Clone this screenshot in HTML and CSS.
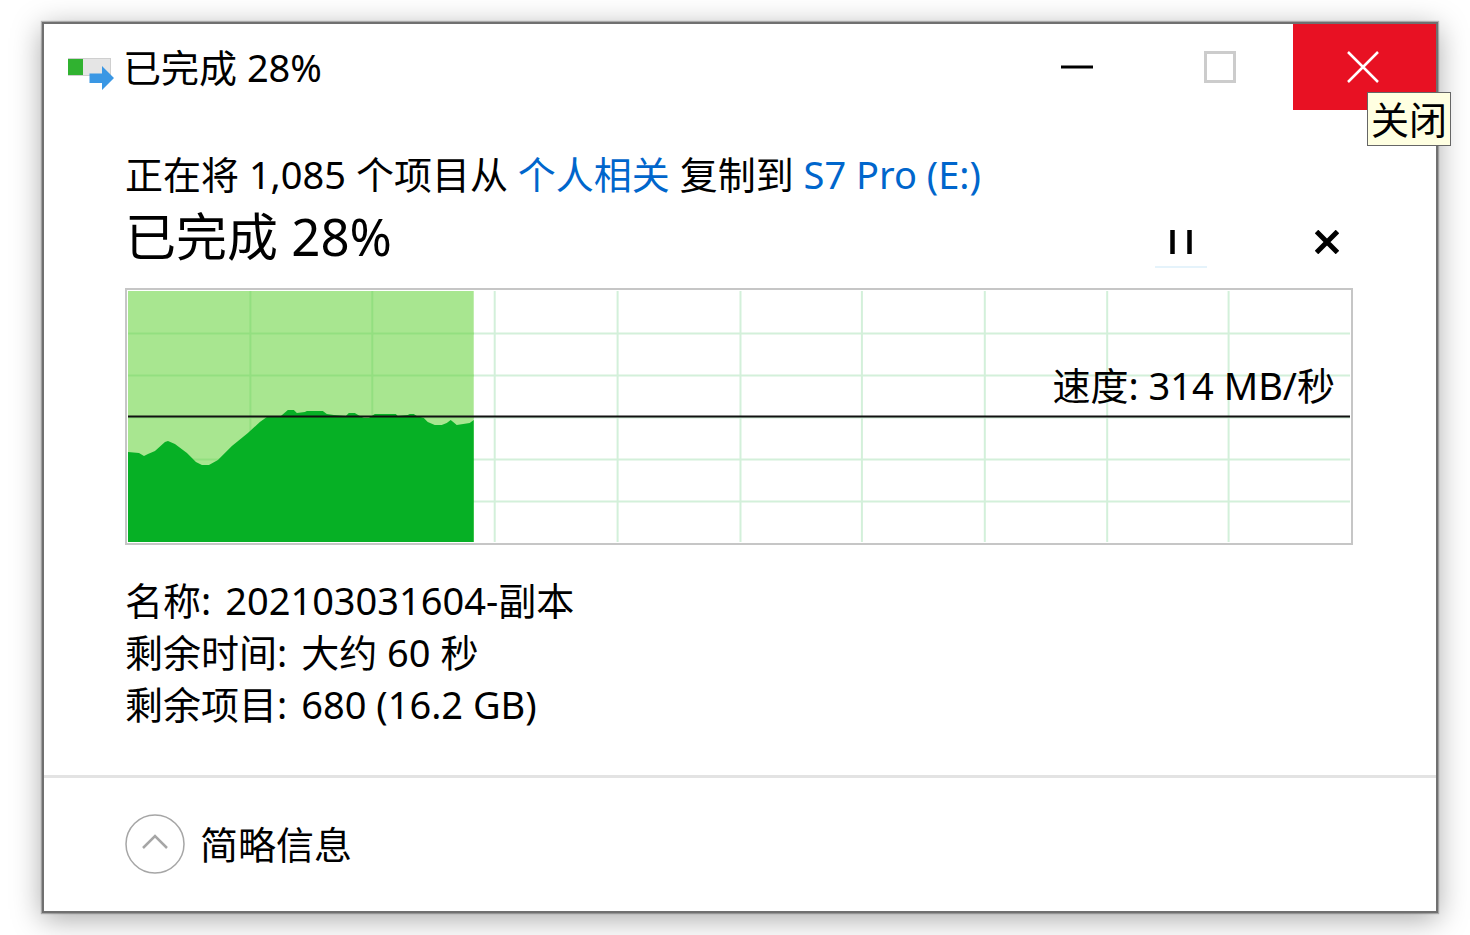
FILE: index.html
```
<!DOCTYPE html>
<html lang="zh-CN">
<head>
  <meta charset="UTF-8">
  <meta name="viewport" content="width=device-width, initial-scale=1.0">
  <title>已完成 28%</title>
  <link rel="stylesheet" href="styles.css">
</head>
<body>
  <div class="window">
    <header class="titlebar">
      <svg class="app-icon" width="48" height="36" viewBox="0 0 48 36" aria-hidden="true">
        <rect x="1.5" y="2.5" width="42" height="17" fill="#e5e5e5" stroke="#cfcfcf"/>
        <rect x="1" y="3" width="15" height="16" fill="#30b230"/>
        <path d="M22.5 17.5H35V10L47 22L35 34V27H22.5Z" fill="#3a97e4"/>
      </svg>
      <h1 class="title">已完成 28%</h1>
      <div class="window-controls">
        <button type="button" class="control" aria-label="最小化">
          <svg width="32" height="32" viewBox="0 0 32 32"><path d="M0 16H32" stroke="#000" stroke-width="3"/></svg>
        </button>
        <button type="button" class="control" aria-label="最大化" disabled>
          <svg width="32" height="32" viewBox="0 0 32 32"><rect x="1.5" y="1.5" width="29" height="29" fill="none" stroke="#ccc" stroke-width="3"/></svg>
        </button>
        <button type="button" class="control close" aria-describedby="closeTip" aria-label="关闭">
          <svg width="32" height="32" viewBox="0 0 32 32"><path d="M1 1L31 31M31 1L1 31" stroke="#fff" stroke-width="2.5"/></svg>
        </button>
        <span class="tooltip" id="closeTip" role="tooltip">关闭</span>
      </div>
    </header>

    <main>
      <p class="status">正在将 1,085 个项目从 <a href="#source">个人相关</a> 复制到 <a href="#target">S7 Pro (E:)</a></p>

      <div class="progress-row">
        <h2>已完成 28%</h2>
        <div class="actions">
          <button type="button" class="action pause" aria-label="暂停">
            <svg width="24" height="24" viewBox="0 0 24 24"><path d="M3.5 0V24M20.5 0V24" stroke="#000" stroke-width="4.5"/></svg>
          </button>
          <button type="button" class="action" aria-label="取消">
            <svg width="24" height="24" viewBox="0 0 24 24"><path d="M1.5 1.5L22.5 22.5M22.5 1.5L1.5 22.5" stroke="#000" stroke-width="5"/></svg>
          </button>
        </div>
      </div>

      <!-- Transfer speed chart -->
      <div class="chart">
        <svg viewBox="0 0 1223 251" preserveAspectRatio="none" aria-hidden="true">
          <path class="grid" d="M122.5 0V251M244.5 0V251M367 0V251M490 0V251M613 0V251M734.5 0V251M857.5 0V251M980 0V251M1101.5 0V251M0 42.5H1223M0 84.5H1223M0 126.5H1223M0 168.5H1223M0 210.5H1223"/>
          <rect class="done" width="346" height="251"/>
          <path class="done-grid" d="M122.5 0V251M244.5 0V251M0 42.5H346M0 84.5H346M0 126.5H346M0 168.5H346M0 210.5H346"/>
          <path class="speed" d="M0 161L11 162L16 165L20 163L27 160L37 151L40 150L47 153L59 162L68 171L74 174L81 174L90 169L104 155L120 142L132 131L139 126L153 125L160 119L166 119L169 122L177 121L179 120L195 120L199 123L206 124L218 125L221 122L227 122L232 125L236 127L241 127L247 123L268 123L270 125L280 124L282 123L286 123L289 125L296 127L300 131L307 134L314 134L319 132L323 129L329 134L342 132L346 129V251H0Z"/>
          <path class="average" d="M0 125.5H1223"/>
        </svg>
        <span class="speed-label">速度: 314 MB/秒</span>
      </div>

      <dl class="details">
        <div><dt>名称:</dt><dd>202103031604-副本</dd></div>
        <div><dt>剩余时间:</dt><dd>大约 60 秒</dd></div>
        <div><dt>剩余项目:</dt><dd>680 (16.2 GB)</dd></div>
      </dl>
    </main>

    <footer>
      <button type="button" class="toggle">
        <svg width="60" height="60" viewBox="0 0 60 60" fill="none" aria-hidden="true">
          <circle cx="30" cy="30" r="29" stroke="#a6a6a6" stroke-width="1.5"/>
          <path d="M18 34L30 22L42 34" stroke="#a6a6a6" stroke-width="2.5"/>
        </svg>
        简略信息
      </button>
    </footer>
  </div>
</body>
</html>
```
FILE: styles.css
```
* {
  box-sizing: border-box;
}

body {
  margin: 0;
  padding: 22px 32px 22px 42px;
  min-height: 100vh;
  display: flex;
  background: #fff;
  color: #000;
  font-family: "Noto Sans", "Noto Sans CJK SC", sans-serif;
  font-size: 38px;
  line-height: 52px;
}

h1, h2, p, dl, dd {
  margin: 0;
  font-weight: normal;
}

button {
  padding: 0;
  border: none;
  background: none;
  color: inherit;
  font: inherit;
  cursor: pointer;
}

svg {
  display: block;
}

.window {
  flex: 1;
  min-width: 0;
  display: flex;
  flex-direction: column;
  border: 2px solid #707070;
  background: #fff;
  box-shadow: 0 0 1px 1px rgba(0, 0, 0, 0.25), 0 6px 28px rgba(0, 0, 0, 0.35);
}

/* Title bar */
.titlebar {
  display: flex;
  align-items: center;
  height: 86px;
  padding-left: 23px;
}

.app-icon {
  margin: 14px 8px 0 0;
}

.title {
  flex: 1;
  font-size: 38px;
}

.window-controls {
  position: relative;
  display: flex;
  align-self: stretch;
}

.control {
  display: flex;
  align-items: center;
  justify-content: center;
  width: 143px;
  padding-right: 4px;
}

.close {
  background: #e81123;
}

.tooltip {
  position: absolute;
  top: 68px;
  right: -15px;
  padding: 0 3px;
  border: 1px solid #666;
  background: #ffffe1;
  white-space: nowrap;
}

/* Content */
main {
  flex: 1;
  padding: 38px 83px 40px 81px;
}

a {
  color: #0066cc;
  text-decoration: none;
}

.progress-row {
  display: flex;
  align-items: flex-end;
  justify-content: space-between;
  height: 72px;
  margin-bottom: 16px;
}

h2 {
  font-size: 51px;
  line-height: 72px;
}

.actions {
  display: flex;
  gap: 94px;
  margin-bottom: 4px;
}

.action {
  display: flex;
  align-items: center;
  justify-content: center;
  width: 52px;
  height: 50px;
  border-bottom: 2px solid transparent;
}

.pause {
  border-color: #e5f3fb;
}

.chart {
  position: relative;
  padding: 1px;
  border: 2px solid #c6c6c6;
}

.chart svg {
  width: 100%;
  height: 251px;
}

.grid,
.done-grid,
.average {
  fill: none;
  stroke: #d3f0da;
  stroke-width: 2;
}

.done {
  fill: #a8e690;
}

.done-grid {
  stroke: #93df80;
}

.speed {
  fill: #06b025;
}

.average {
  stroke: #111;
}

.speed-label {
  position: absolute;
  top: 69px;
  right: 16px;
}

.details {
  margin-top: 29px;
}

.details div {
  display: flex;
  gap: 14px;
}

/* Footer */
footer {
  padding: 36px 81px 37px;
  border-top: 3px solid #e3e3e3;
}

.toggle {
  display: flex;
  align-items: center;
  gap: 15px;
}
```
